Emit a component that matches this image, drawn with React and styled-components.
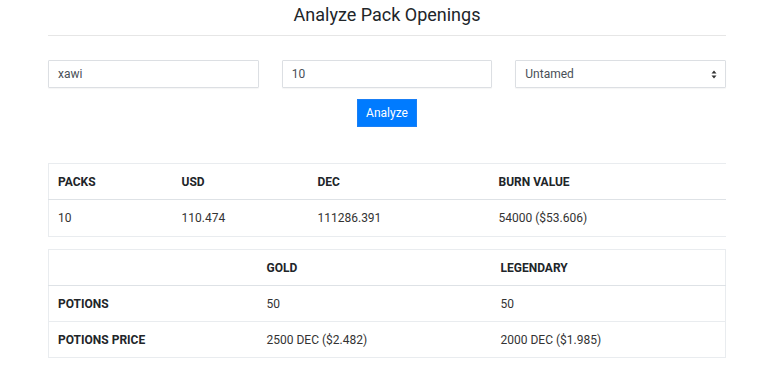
import React from "react";
import styled, { createGlobalStyle } from "styled-components";

const Global = createGlobalStyle`
  html, body { margin: 0; padding: 0; background: #fff; }
  body { font-family: Roboto, "Liberation Sans", Arial, sans-serif; color: #212529; }
  * { box-sizing: border-box; }
`;

const Page = styled.div`
  width: 678px;
  margin-left: 48px;
  padding-top: 4px;
`;

const Title = styled.h1`
  margin: 0;
  font-size: 18px;
  font-weight: 400;
  text-align: center;
  line-height: 21px;
  color: #212529;
`;

const Rule = styled.hr`
  margin: 10px 0 0;
  border: 0;
  border-top: 1px solid #e6e6e6;
`;

const Form = styled.div`
  margin-top: 24px;
  display: flex;
  flex-direction: column;
  align-items: center;
  gap: 11px;
`;

const Fields = styled.div`
  width: 100%;
  display: grid;
  grid-template-columns: repeat(3, 1fr);
  column-gap: 23px;
`;

const Field = styled.div`
  height: 28px;
  border: 1px solid #dcdfe3;
  border-radius: 1px;
  box-shadow: 0 1px 1px rgba(0,0,0,0.04);
  display: flex;
  align-items: center;
  justify-content: space-between;
  padding: 0 8px 0 9px;
  font-size: 12px;
  color: #495057;
`;

const Arrows = styled.svg`
  width: 6px;
  height: 9px;
`;

const Button = styled.button`
  height: 28px;
  padding: 0 8px;
  background: #007bff;
  color: #fff;
  border: 1px solid #1a7ff5;
  border-radius: 0;
  font-family: inherit;
  font-size: 12px;
`;

const Table = styled.table`
  width: 100%;
  border-collapse: collapse;
  table-layout: fixed;
  margin-top: ${p => p.$mt}px;
  font-size: 12px;
  border-left: 1px solid #e9ecef;
  border-top: 1px solid #e9ecef;
  border-right: ${p => (p.$right ? "1px solid #e9ecef" : "0")};
`;

const Th = styled.th`
  height: 36px;
  padding: 0 9px;
  text-align: left;
  font-weight: 700;
  text-transform: uppercase;
  border-bottom: 1.5px solid #dee2e6;
  color: #212529;
`;

const Td = styled.td`
  height: ${p => p.$h || 36}px;
  padding: 0 9px;
  text-align: left;
  font-weight: ${p => (p.$bold ? 700 : 400)};
  border-bottom: 1px solid #e9ecef;
  color: ${p => (p.$bold ? "#212529" : "#333")};
`;

export default function App() {
  return (
    <>
      <Global />
      <Page>
        <Title>Analyze Pack Openings</Title>
        <Rule />
        <Form>
          <Fields>
            <Field>xawi</Field>
            <Field>10</Field>
            <Field>
              Untamed
              <Arrows viewBox="0 0 6 9">
                <path d="M3 0.5 L5.5 3.5 H0.5 Z M3 8.5 L5.5 5.5 H0.5 Z" fill="#333" />
              </Arrows>
            </Field>
          </Fields>
          <Button>Analyze</Button>
        </Form>
        <Table $mt={36}>
          <colgroup>
            <col style={{ width: 124 }} />
            <col style={{ width: 136 }} />
            <col style={{ width: 181 }} />
            <col />
          </colgroup>
          <thead>
            <tr>
              <Th>Packs</Th>
              <Th>USD</Th>
              <Th>DEC</Th>
              <Th>Burn Value</Th>
            </tr>
          </thead>
          <tbody>
            <tr>
              <Td $h={37}>10</Td>
              <Td $h={37}>110.474</Td>
              <Td $h={37}>111286.391</Td>
              <Td $h={37}>54000 ($53.606)</Td>
            </tr>
          </tbody>
        </Table>
        <Table $mt={12} $right>
          <colgroup>
            <col style={{ width: 209 }} />
            <col style={{ width: 234 }} />
            <col />
          </colgroup>
          <thead>
            <tr>
              <Th></Th>
              <Th>Gold</Th>
              <Th>Legendary</Th>
            </tr>
          </thead>
          <tbody>
            <tr>
              <Td $bold>POTIONS</Td>
              <Td>50</Td>
              <Td>50</Td>
            </tr>
            <tr>
              <Td $bold>POTIONS PRICE</Td>
              <Td>2500 DEC ($2.482)</Td>
              <Td>2000 DEC ($1.985)</Td>
            </tr>
          </tbody>
        </Table>
      </Page>
    </>
  );
}
